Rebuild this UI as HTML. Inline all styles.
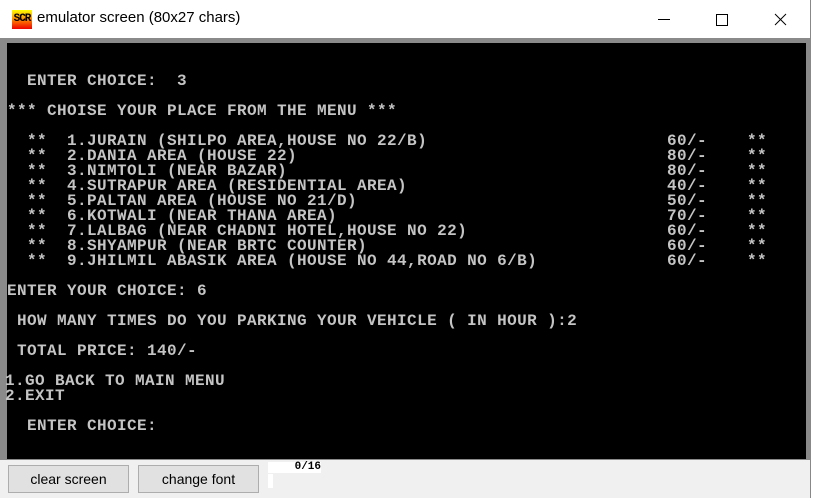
<!DOCTYPE html>
<html><head><style>
html,body{margin:0;padding:0;background:#fff;width:814px;height:501px;overflow:hidden;position:relative;font-family:"Liberation Sans",sans-serif}
#win{position:absolute;left:0;top:0;width:810px;height:498px;background:#f0f0f0;border-right:1px solid #888}
#title{position:absolute;left:0;top:0;width:810px;height:38px;background:#fff}
#ico{position:absolute;left:12px;top:10px;width:20px;height:19px;background:linear-gradient(#ff0 0%,#f80 50%,#e00 100%);font:bold 11px "Liberation Mono",monospace;color:#000;line-height:19px;text-align:center;letter-spacing:-1px}
#tt{position:absolute;left:37px;top:9px;font-size:15px;color:#000}
#frame{position:absolute;left:0;top:38px;width:810px;height:422px;background:#8a8a8a}
#scr{position:absolute;left:7px;top:43px;width:799px;height:416px;background:#000}
.l{position:absolute;left:7px;white-space:pre;font:bold 16px "Liberation Mono",monospace;letter-spacing:0.4px;color:#c4c4c4;line-height:15px;height:15px}
.p{left:667px}.s{left:747px}
.btn{position:absolute;top:465px;height:28px;width:121px;background:#e1e1e1;border:1px solid #adadad;box-sizing:border-box;font-size:14px;text-align:center;line-height:26px;color:#000}
</style></head><body>
<div id="win">
<div id="title"><div id="ico">SCR</div><div id="tt">emulator screen (80x27 chars)</div>
<svg style="position:absolute;left:655px;top:10px" width="140" height="20" stroke="#000" stroke-width="1" fill="none">
<line x1="3" y1="9.5" x2="15" y2="9.5"/><rect x="61.5" y="4.5" width="11" height="11"/><line x1="120" y1="4" x2="131" y2="15"/><line x1="131" y1="4" x2="120" y2="15"/></svg></div>
<div id="frame"></div>
<div id="scr"></div>
<div class="l" style="top:74px">  ENTER CHOICE:  3</div>
<div class="l" style="top:104px">*** CHOISE YOUR PLACE FROM THE MENU ***</div>
<div class="l" style="top:134px">  **  1.JURAIN (SHILPO AREA,HOUSE NO 22/B)</div>
<div class="l" style="top:149px">  **  2.DANIA AREA (HOUSE 22)</div>
<div class="l" style="top:164px">  **  3.NIMTOLI (NEAR BAZAR)</div>
<div class="l" style="top:179px">  **  4.SUTRAPUR AREA (RESIDENTIAL AREA)</div>
<div class="l" style="top:194px">  **  5.PALTAN AREA (HOUSE NO 21/D)</div>
<div class="l" style="top:209px">  **  6.KOTWALI (NEAR THANA AREA)</div>
<div class="l" style="top:224px">  **  7.LALBAG (NEAR CHADNI HOTEL,HOUSE NO 22)</div>
<div class="l" style="top:239px">  **  8.SHYAMPUR (NEAR BRTC COUNTER)</div>
<div class="l" style="top:254px">  **  9.JHILMIL ABASIK AREA (HOUSE NO 44,ROAD NO 6/B)</div>
<div class="l p" style="top:134px">60/-</div><div class="l s" style="top:134px">**</div>
<div class="l p" style="top:149px">80/-</div><div class="l s" style="top:149px">**</div>
<div class="l p" style="top:164px">80/-</div><div class="l s" style="top:164px">**</div>
<div class="l p" style="top:179px">40/-</div><div class="l s" style="top:179px">**</div>
<div class="l p" style="top:194px">50/-</div><div class="l s" style="top:194px">**</div>
<div class="l p" style="top:209px">70/-</div><div class="l s" style="top:209px">**</div>
<div class="l p" style="top:224px">60/-</div><div class="l s" style="top:224px">**</div>
<div class="l p" style="top:239px">60/-</div><div class="l s" style="top:239px">**</div>
<div class="l p" style="top:254px">60/-</div><div class="l s" style="top:254px">**</div>
<div class="l" style="top:284px">ENTER YOUR CHOICE: 6</div>
<div class="l" style="top:314px"> HOW MANY TIMES DO YOU PARKING YOUR VEHICLE ( IN HOUR ):2</div>
<div class="l" style="top:344px"> TOTAL PRICE: 140/-</div>
<div class="l" style="top:374px;left:5px">1.GO BACK TO MAIN MENU</div>
<div class="l" style="top:389px;left:5px">2.EXIT</div>
<div class="l" style="top:419px">  ENTER CHOICE:</div>
<div class="btn" style="left:8px">clear screen</div>
<div class="btn" style="left:138px">change font</div>
<div style="position:absolute;left:268px;top:462px;width:53px;height:11px;background:#fff;font:bold 11px 'Liberation Mono',monospace;line-height:11px;text-align:right;color:#000">0/16</div>
<div style="position:absolute;left:268px;top:474px;width:5px;height:14px;background:#fff"></div>
</div>
</body></html>
